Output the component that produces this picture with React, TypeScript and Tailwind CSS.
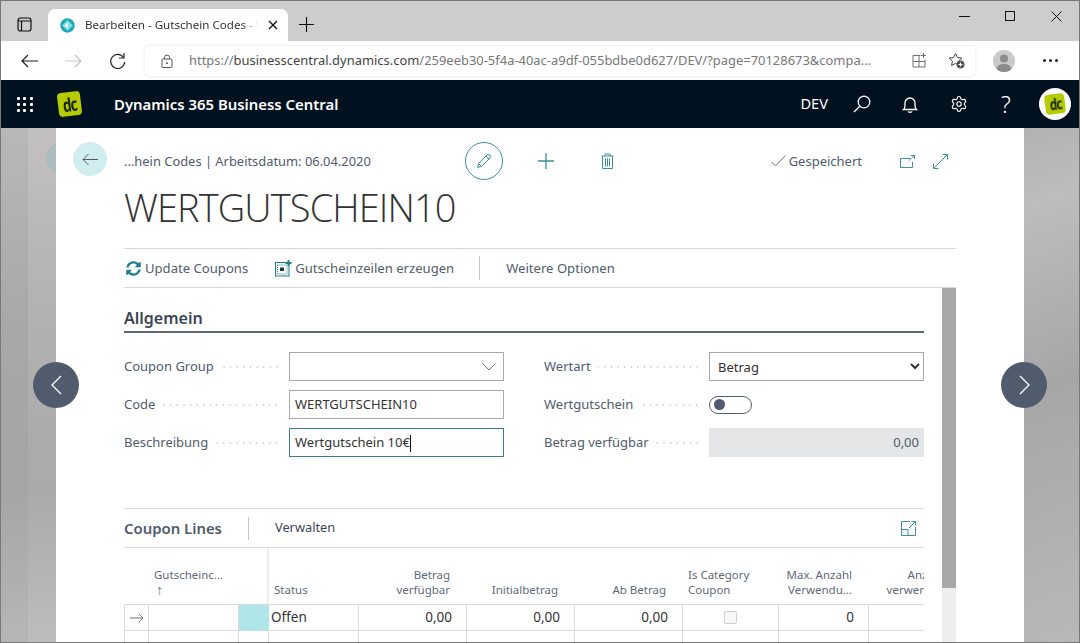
import React from 'react';
import { Settings } from 'lucide-react';
import { FaSyncAlt } from 'react-icons/fa';

const TEAL = '#3b9299';

function FieldRow({ label, children }: { label: string; children: React.ReactNode }) {
  return (
    <div className="flex h-[29px] items-center">
      <span className="whitespace-nowrap pt-px text-[13px] text-[#505c6d]">{label}</span>
      {/* dotted leader between label and input */}
      <span className="ml-[7px] mr-[9px] h-[2px] flex-1 bg-[radial-gradient(circle,#c9cdd1_0.8px,transparent_1.1px)] bg-[length:6.600px_2px] bg-right" />
      <div className="w-[215px] shrink-0">{children}</div>
    </div>
  );
}

function DcLogo({ size = 'big' }: { size?: 'big' | 'small' }) {
  return size === 'big' ? (
    <div className="flex h-[24px] w-[23px] rotate-[-7deg] items-center justify-center rounded-[4px] bg-[#b5cc00]">
      <span className="scale-x-90 scale-y-125 text-[15px] font-bold leading-none tracking-[-1px] text-[#1a2200]">dc</span>
    </div>
  ) : (
    <div className="flex h-[20px] w-[20px] rotate-[-7deg] items-center justify-center rounded-[4px] bg-[#b5cc00] blur-[0.3px]">
      <span className="scale-x-90 scale-y-125 text-[13px] font-bold leading-none tracking-[-1px] text-[#1a2200]">dc</span>
    </div>
  );
}

function BrowserChrome() {
  return (
    <>
      <div className="flex h-[40px] items-end bg-[#cdcdcd]">
        <div className="flex h-[32px] w-[47px] items-center justify-center pb-[2px]">
          <svg width="15" height="15" viewBox="0 0 15 15" fill="none" stroke="#111" strokeWidth="1.200">
            <rect x="1" y="1" width="13" height="13" rx="2.500" />
            <path d="M1 4h13M4.500 4v10" />
          </svg>
        </div>
        <div className="flex h-[32px] w-[240px] items-center rounded-t-[7px] bg-white pl-[12px]">
          <svg width="15" height="15" viewBox="0 0 15 15">
            <circle cx="7.500" cy="7.500" r="7.200" fill="#1ba6b5" />
            <path d="M2 7.500 7.500 2l5.500 5.500-5.500 5.500z" fill="#7fe0e6" />
            <path d="M4.500 7.500 8 4.500v6z" fill="#fff" />
          </svg>
          <span className="ml-[10px] w-[174px] whitespace-nowrap text-[11.600px] text-[#333] [clip-path:inset(0)] [mask-image:linear-gradient(to_right,#000_90%,transparent)]">
            Bearbeiten - Gutschein Codes - W
          </span>
          <svg className="ml-[9px]" width="10" height="10" viewBox="0 0 10 10" stroke="#111" strokeWidth="1.300">
            <path d="M1 1l8 8M9 1l-8 8" />
          </svg>
        </div>
        <div className="flex h-[32px] w-[36px] items-center justify-center pb-[2px]">
          <svg width="15" height="15" viewBox="0 0 15 15" stroke="#111" strokeWidth="1.100">
            <path d="M7.500 0v15M0 7.500h15" />
          </svg>
        </div>
        <div className="flex-1" />
        <div className="flex h-[32px] items-start">
          <div className="flex h-[14px] w-[46px] items-center justify-center">
            <span className="h-px w-[11px] bg-[#111]" />
          </div>
          <div className="flex h-[14px] w-[46px] items-center justify-center">
            <span className="h-[10px] w-[10px] border border-[#111]" />
          </div>
          <div className="flex h-[14px] w-[46px] items-center justify-center">
            <svg width="11" height="11" viewBox="0 0 11 11" stroke="#111" strokeWidth="1">
              <path d="M.500.500l10 10M10.500.500l-10 10" />
            </svg>
          </div>
        </div>
      </div>
      <div className="flex h-[39px] items-center bg-white">
        <div className="flex w-[144px] items-center">
          <svg className="ml-[20px]" width="17" height="14" viewBox="0 0 17 14" fill="none" stroke="#222" strokeWidth="1.200">
            <path d="M17 7H1M7 1 1 7l6 6" />
          </svg>
          <svg className="ml-[27px]" width="17" height="14" viewBox="0 0 17 14" fill="none" stroke="#c4c4c4" strokeWidth="1.200">
            <path d="M0 7h16M10 1l6 6-6 6" />
          </svg>
          <svg className="ml-[27px]" width="17" height="17" viewBox="0 0 17 17" fill="none" stroke="#222" strokeWidth="1.200">
            <path d="M14.500 5.500A7 7 0 1 0 15.700 10" />
            <path d="M15 1v5h-5" />
          </svg>
        </div>
        <div className="flex h-[30px] w-[830px] items-center rounded-[4px] bg-white pl-[16px] shadow-[0_0_3px_rgba(0,0,0,0.14)]">
          <svg width="12" height="14" viewBox="0 0 12 14" fill="none" stroke="#555" strokeWidth="1">
            <rect x="1" y="5" width="10" height="8.500" rx="1" />
            <path d="M3.500 5V3.500a2.500 2.500 0 0 1 5 0V5" />
            <circle cx="6" cy="9.200" r=".6" fill="#555" />
          </svg>
          <span className="ml-[16px] w-[703px] whitespace-nowrap text-[12.950px] text-[#777777]">
            https://<span className="text-[#444444]">businesscentral.dynamics.com</span>/259eeb30-5f4a-40ac-a9df-055bdbe0d627/DEV/?page=70128673&compa...
          </span>
          <svg className="ml-[20px]" width="15" height="15" viewBox="0 0 15 15" fill="none" stroke="#707070" strokeWidth="1">
            <path d="M8.500 2.500H1v11.500h12V6.500M1 8.500h12M7 2.500V14M11.500 0v5M9 2.500h5" />
          </svg>
          <svg className="ml-[21px]" width="17" height="17" viewBox="0 0 17 17">
            <path d="M7.500 1.500l1.900 4 4.400.6-3.200 3 .8 4.400-3.900-2.100-3.900 2.100.8-4.400-3.200-3 4.400-.6z" fill="none" stroke="#444" strokeWidth="1" />
            <circle cx="12.500" cy="12.500" r="4" fill="#555" />
            <path d="M12.500 10.500v4M10.500 12.500h4" stroke="#fff" strokeWidth="1" />
          </svg>
        </div>
        <div className="ml-[18px] flex h-[22px] w-[22px] items-center justify-center overflow-hidden rounded-full bg-[#c9c9c9]">
          <svg width="22" height="22" viewBox="0 0 22 22" fill="#8b8b8b">
            <circle cx="11" cy="8.500" r="4" />
            <path d="M3.500 19c1-4 4-5 7.500-5s6.500 1 7.500 5v3h-15z" />
          </svg>
        </div>
        <div className="ml-[28px] flex gap-[3px]">
          <span className="h-[3px] w-[3px] rounded-full bg-[#222]" />
          <span className="h-[3px] w-[3px] rounded-full bg-[#222]" />
          <span className="h-[3px] w-[3px] rounded-full bg-[#222]" />
        </div>
      </div>
    </>
  );
}

function AppBar() {
  const grid = Array.from({ length: 9 });
  return (
    <div className="flex h-[48px] items-center bg-[#00111f] text-white">
      <div className="ml-[16px] grid w-[16px] grid-cols-3 gap-[3px]">
        {grid.map((_, i) => (
          <span key={i} className="h-[3px] w-[3px] rounded-[1px] bg-white" />
        ))}
      </div>
      <div className="ml-[25px]">
        <DcLogo />
      </div>
      <span className="ml-[33px] whitespace-nowrap text-[14.900px] font-semibold">Dynamics 365 Business Central</span>
      <div className="flex-1" />
      <span className="text-[14.600px]">DEV</span>
      <svg className="ml-[25px]" width="18" height="18" viewBox="0 0 18 18" fill="none" stroke="#fff" strokeWidth="1.300">
        <circle cx="11" cy="7" r="5.800" />
        <path d="M6.800 11.200 1 17" />
      </svg>
      <svg className="ml-[31px]" width="16" height="17" viewBox="0 0 16 17" fill="none" stroke="#fff" strokeWidth="1.300">
        <path d="M1.500 13.500c1.200-1 1.500-2 1.500-4V7a5 5 0 0 1 10 0v2.500c0 2 .3 3 1.500 4z" />
        <path d="M6 15.500c.4 1 3.600 1 4 0" />
      </svg>
      <Settings className="ml-[32px]" size={18} strokeWidth={1.500} />
      <span className="ml-[32px] w-[12px] text-center text-[23px] font-light leading-none">?</span>
      <div className="ml-[27px] mr-[8px] flex h-[32px] w-[32px] items-center justify-center rounded-full bg-white">
        <DcLogo size="small" />
      </div>
    </div>
  );
}

function HeaderRow() {
  return (
    <div className="ml-[17px] mr-[68px] mt-[14px] flex h-[38px] items-center">
      <div className="flex h-[34px] w-[34px] items-center justify-center self-start rounded-full bg-[#d2edef]">
        <svg width="16" height="13" viewBox="0 0 16 13" fill="none" stroke="#4f5b66" strokeWidth="1">
          <path d="M16 6.500H1M6.500 1 1 6.500 6.500 12" />
        </svg>
      </div>
      <span className="ml-[17px] w-[341px] whitespace-nowrap pt-[2px] text-[12.900px] text-[#505c6d]">...hein Codes | Arbeitsdatum: 06.04.2020</span>
      <div className="flex h-[38px] w-[38px] items-center justify-center rounded-full border border-[#3b9299]">
        <svg width="16" height="16" viewBox="0 0 16 16" fill="none" stroke={TEAL} strokeWidth="1">
          <path d="M1.500 14.500 2.500 10.500 11 2a1.700 1.700 0 0 1 3 3l-8.500 8.500zM2.500 10.500l3 3M10 3l3 3" />
        </svg>
      </div>
      <svg className="ml-[35px]" width="16" height="16" viewBox="0 0 16 16" stroke={TEAL} strokeWidth="1.300">
        <path d="M8 0v16M0 8h16" />
      </svg>
      <svg className="ml-[47px]" width="13" height="16" viewBox="0 0 13 16" fill="none" stroke={TEAL} strokeWidth="1">
        <path d="M.500 3h12M4 3V1h5v2M1.500 3v12.500h10V3M4.500 5.500v8M6.500 5.500v8M8.500 5.500v8" />
      </svg>
      <div className="flex-1" />
      <svg width="15" height="12" viewBox="0 0 15 12" fill="none" stroke="#6b7480" strokeWidth="1">
        <path d="M.500 7l4 4L14.500.500" />
      </svg>
      <span className="ml-[3px] pt-[2px] text-[13px] text-[#505c6d]">Gespeichert</span>
      <svg className="ml-[38px]" width="15" height="13" viewBox="0 0 15 13" fill="none" stroke={TEAL} strokeWidth="1">
        <path d="M10 3.500H.500v9h12V7M9 5.500 14.500.500M11 .500h3.500V4" />
      </svg>
      <svg className="ml-[18px]" width="15" height="15" viewBox="0 0 15 15" fill="none" stroke={TEAL} strokeWidth="1">
        <path d="M.500 14.500l14-14M.500 9.500v5h5M9.500.500h5v5" />
      </svg>
      <span className="w-[8px]" />
    </div>
  );
}

function ActionBar() {
  return (
    <div className="mx-[68px] flex h-[40px] items-center border-y border-[#d8d8d8] text-[13.100px] text-[#505c6d]">
      <FaSyncAlt className="ml-[2px] text-[15px] text-[#1f7f86]" />
      <span className="ml-[4px] pt-[2px]">Update Coupons</span>
      <svg className="ml-[27px]" width="17" height="17" viewBox="0 0 17 17" fill="none">
        <rect x=".500" y="2.500" width="13.500" height="13.500" stroke="#1f7f86" />
        <rect x="2.500" y="5" width="9.500" height="9" stroke="#1f7f86" strokeDasharray="1 1" />
        <path d="M5 7.500h4v3.500H5z" fill="#173c40" />
        <path d="M13.500 0v6M10.500 3h6" stroke="#1f7f86" strokeWidth="1.800" />
      </svg>
      <span className="ml-[3px] pt-[2px]">Gutscheinzeilen erzeugen</span>
      <span className="ml-[25px] h-[24px] w-px bg-[#c4c4c4]" />
      <span className="ml-[26px] pt-[2px]">Weitere Optionen</span>
    </div>
  );
}

function GeneralSection() {
  return (
    <>
      <div className="flex h-[45px] items-center border-b-2 border-[#5f6a76] pt-[16px]">
        <span className="text-[16px] font-semibold text-[#3b4654]">Allgemein</span>
      </div>
      <div className="mt-[19px] grid grid-cols-[380px_380px] gap-x-[40px] gap-y-[9px]">
        <FieldRow label="Coupon Group">
          <div className="flex h-[29px] items-center justify-end border border-[#a8a8a8] pr-[7px]">
            <svg width="14" height="8" viewBox="0 0 14 8" fill="none" stroke="#6b7480" strokeWidth="1">
              <path d="M.500.500 7 7 13.500.500" />
            </svg>
          </div>
        </FieldRow>
        <FieldRow label="Wertart">
          <select className="h-[29px] w-full border border-[#a8a8a8] bg-white pl-[4px] text-[13px] text-[#333]" defaultValue="Betrag">
            <option>Betrag</option>
          </select>
        </FieldRow>
        <FieldRow label="Code">
          <div className="flex h-[29px] items-center border border-[#a8a8a8] pl-[5px] pt-px text-[13px] text-[#333]">WERTGUTSCHEIN10</div>
        </FieldRow>
        <FieldRow label="Wertgutschein">
          <div className="flex h-[18px] w-[43px] items-center rounded-full border border-[#505c6d] pl-[4px]">
            <span className="h-[11px] w-[11px] rounded-full bg-[#505c6d]" />
          </div>
        </FieldRow>
        <FieldRow label="Beschreibung">
          <div className="flex h-[29px] items-center border border-[#3d7f84] pl-[5px] pt-px text-[13px] text-[#333]">
            Wertgutschein 10€
            <span className="h-[17px] w-px bg-[#111]" />
          </div>
        </FieldRow>
        <FieldRow label="Betrag verfügbar">
          <div className="flex h-[29px] items-center justify-end bg-[#e4e6e7] pr-[5px] text-[13px] text-[#505c6d]">0,00</div>
        </FieldRow>
      </div>
    </>
  );
}

const GRID = 'grid grid-cols-[25px_90px_30px_90px_108px_108px_108px_96px_90px_92px]';
const HEAD = 'flex flex-col justify-end pb-[7px] text-[11.500px] leading-[15px] text-[#5f6a76]';
const CELL = 'flex h-[26px] items-center border-b border-r border-[#d9d9d9] text-[13.500px] text-[#333]';

function CouponLines() {
  return (
    <>
      <div className="mt-[51px] flex h-[40px] items-center border-y border-[#d8d8d8]">
        <span className="text-[14.900px] font-semibold text-[#505c6d]">Coupon Lines</span>
        <span className="ml-[26px] h-[23px] w-px bg-[#c4c4c4]" />
        <span className="ml-[26px] text-[12.800px] text-[#3b4654]">Verwalten</span>
        <div className="flex-1" />
        <svg className="mr-[8px]" width="15" height="15" viewBox="0 0 15 15" fill="none" stroke={TEAL} strokeWidth="1">
          <path d="M9 .500H.500v14h14V6M.500 8.500H7v6M8 7l6.500-6.500M10.500.500h4v4" />
        </svg>
      </div>
      <div className="h-[94px] overflow-hidden">
        <div className={`${GRID} h-[56px] w-[837px]`}>
          <div className={`${HEAD} col-span-3 border-r-2 border-[#eeeeee] pl-[30px]`}>
            <span>Gutscheinc...</span>
            <span className="pl-[2px] text-[14px]">↑</span>
          </div>
          <div className={`${HEAD} pl-[5px]`}>Status</div>
          <div className={`${HEAD} items-end pr-[17px] text-right`}>
            <span>Betrag</span>
            <span>verfügbar</span>
          </div>
          <div className={`${HEAD} items-end pr-[17px]`}>Initialbetrag</div>
          <div className={`${HEAD} items-end pr-[17px]`}>Ab Betrag</div>
          <div className={`${HEAD} pl-[5px]`}>
            <span>Is Category</span>
            <span>Coupon</span>
          </div>
          <div className={`${HEAD} items-end pr-[17px]`}>
            <span>Max. Anzahl</span>
            <span>Verwendu...</span>
          </div>
          <div className={`${HEAD} items-end pr-[17px]`}>
            <span>Anzahl</span>
            <span>verwendet</span>
          </div>
        </div>
        <div className={`${GRID} w-[837px] border-t border-[#d9d9d9]`}>
          <div className="flex h-[26px] items-center justify-center border-x border-b border-[#d9d9d9]">
            <svg width="14" height="10" viewBox="0 0 14 10" fill="none" stroke="#6b7480" strokeWidth="1">
              <path d="M0 5h13M9 1l4 4-4 4" />
            </svg>
          </div>
          <div className={CELL} />
          <div className="h-[26px] bg-[#b0e6ea]" />
          <div className={`${CELL} pl-[2px]`}>Offen</div>
          <div className={`${CELL} justify-end pr-[14px]`}>0,00</div>
          <div className={`${CELL} justify-end pr-[14px]`}>0,00</div>
          <div className={`${CELL} justify-end pr-[14px]`}>0,00</div>
          <div className={`${CELL} justify-center`}>
            <span className="h-[13px] w-[13px] rounded-[2px] border border-[#cfcfcf] bg-[#f7f7f7]" />
          </div>
          <div className={`${CELL} justify-end pr-[14px]`}>0</div>
          <div className={CELL} />
          {/* second row is cut by the window edge, empty cells only */}
          <div className="h-[26px] border-x border-[#d9d9d9]" />
          {Array.from({ length: 9 }).map((_, i) => (
            <div key={i} className="h-[26px] border-r border-[#d9d9d9]" />
          ))}
        </div>
      </div>
    </>
  );
}

function PageCard() {
  return (
    <div className="flex h-full w-[968px] shrink-0 flex-col bg-white">
      <HeaderRow />
      <div className="ml-[68px] flex h-[68px] items-center pb-[15px]">
        <h1 className="whitespace-nowrap font-['Open_Sans',sans-serif] text-[38px] font-light leading-none tracking-[-0.9px] text-[#333]">WERTGUTSCHEIN10</h1>
      </div>
      <ActionBar />
      <div className="mx-[68px] flex min-h-0 flex-1">
        <div className="w-[818px] shrink-0 pr-[18px]">
          <GeneralSection />
          <CouponLines />
        </div>
        {/* page scrollbar */}
        <div className="w-[14px] bg-[#eeeeee]">
          <div className="h-[300px] bg-[#a8a8a8]" />
        </div>
      </div>
    </div>
  );
}

function PagerButton({ side }: { side: 'left' | 'right' }) {
  return (
    <div
      className={`absolute top-[361px] flex h-[46px] w-[46px] items-center justify-center rounded-full bg-[#505c6d] ${
        side === 'left' ? 'left-[32px]' : 'left-[1000px]'
      }`}
    >
      <svg width="11" height="20" viewBox="0 0 11 20" fill="none" stroke="#fff" strokeWidth="1.300">
        <path d={side === 'left' ? 'M10 1 1 10l9 9' : 'M1 1l9 9-9 9'} />
      </svg>
    </div>
  );
}

export default function App() {
  return (
    <div className="relative h-[643px] w-[1080px] overflow-hidden border border-[#787878] font-['Noto_Sans',sans-serif]">
      <BrowserChrome />
      <AppBar />
      <div className="flex h-[514px]">
        <div className="flex h-full w-[55px] shrink-0">
          <div className="h-full w-[27px] bg-[linear-gradient(to_bottom,#b9b7b7,#a7a7a7_40%,#a5a5a5_70%,#b6b6b6)]" />
          <div className="relative h-full w-[28px] overflow-hidden bg-[linear-gradient(to_bottom,#c2c0c0,#b0b0b0_40%,#aaaaaa_70%,#bdbdbd)]">
            <div className="absolute left-[18px] top-[15px] h-[30px] w-[30px] rounded-full bg-[#aabcbd]" />
          </div>
        </div>
        <PageCard />
        <div className="h-full flex-1 bg-[linear-gradient(160deg,#b2b2b2,#bdbdbd_15%,#a6a6a6_50%,#b8b8b8)]" />
      </div>
      <PagerButton side="left" />
      <PagerButton side="right" />
    </div>
  );
}
